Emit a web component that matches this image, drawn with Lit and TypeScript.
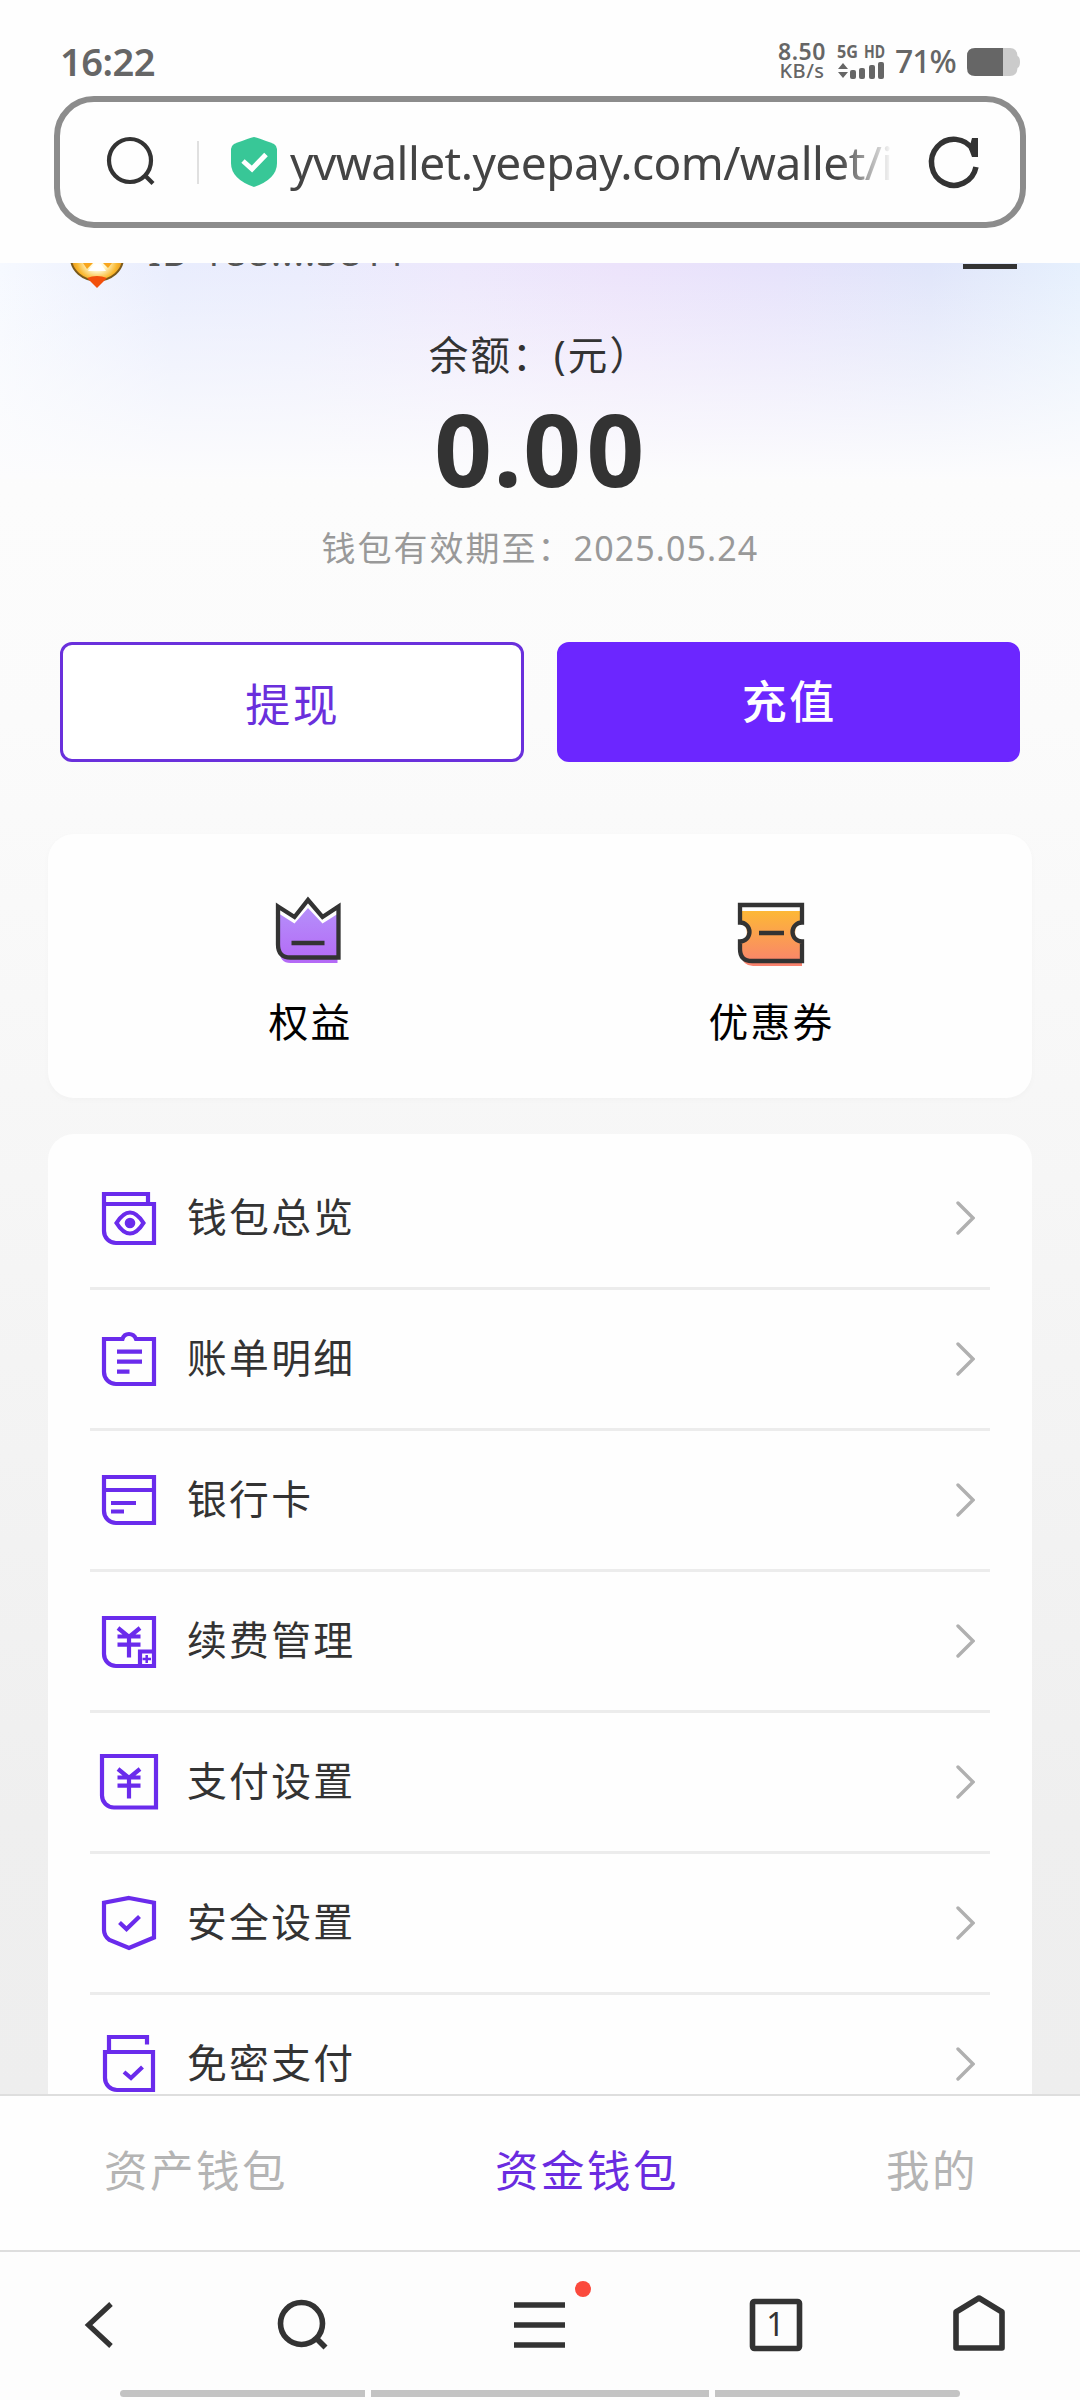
import { LitElement, html, css, svg } from "lit";
import { customElement, property } from "lit/decorators.js";

const yen = svg`<path d="M19 17 L30 26 L41 17 M18.500 25.500 H41.500 M18.500 33.700 H41.500 M30 25 V46.500"/>`;

const icons: Record<string, unknown> = {
  overview: svg`
    <path d="M5 16 H55 V55 H17 A12 12 0 0 1 5 43 V6 H49 V16"/>
    <path d="M17.500 35 Q24 24.500 31 24.500 T44.500 35 Q38 45.500 31 45.500 T17.500 35 Z"/>
    <circle class="solid" cx="31" cy="35" r="5.300"/>`,
  bill: svg`
    <path d="M5 10 H23.500 Q25 5 30 5 Q35 5 37 10 H55 V55 H17 A12 12 0 0 1 5 43 Z"/>
    <path d="M18 22.600 H43 M18 32.700 H43 M18 42.700 H30.500"/>`,
  card: svg`
    <path d="M5 7 H55 V53 H17 A12 12 0 0 1 5 41 Z"/>
    <path d="M5 20 H55 M12 33 H37 M12 41.500 H25"/>`,
  renew: svg`
    <path d="M5 7 H55 V55 H17 A12 12 0 0 1 5 43 Z"/>${yen}
    <path d="M41 55 V40.500 H55"/>
    <path class="thin" d="M43.500 48 H52 M47.700 44 V52"/>`,
  payment: svg`
    <path d="M3 4 H57 V55.500 H15 A12 12 0 0 1 3 43.500 Z"/>${yen}`,
  security: svg`
    <path d="M30 5 L55 9.700 V44.500 L30 55 L10.500 47 Q5 43 5 37 V9.700 Z"/>
    <path d="M20.500 29.500 L27.500 36 L40.500 23.500"/>`,
  nopass: svg`
    <path d="M10 18 V3 H48 V10.500 M6 18 H54 V56 H18 A12 12 0 0 1 6 44 Z"/>
    <path d="M25 38 L32 44 L43.500 33"/>`,
};

@customElement("menu-row")
class MenuRow extends LitElement {
  @property() icon = "";
  @property() label = "";

  static styles = css`
    :host {
      display: flex;
      align-items: center;
      box-sizing: border-box;
      height: 141px;
      padding: 0 15px 0 9px;
      border-bottom: 3px solid #ececec;
    }
    .icon {
      width: 60px;
      height: 60px;
      fill: none;
      stroke: #6a2bec;
      stroke-width: 4.2;
    }
    .icon .solid {
      fill: #6a2bec;
      stroke: none;
    }
    .icon .thin {
      stroke-width: 2.5;
    }
    .label {
      flex: 1;
      margin-left: 28px;
      padding-bottom: 3px;
      font-size: 39.8px;
      line-height: 60px;
      letter-spacing: 2.3px;
      color: #333;
    }
    .arrow {
      width: 20px;
      height: 36px;
      fill: none;
      stroke: #b0b0b0;
      stroke-width: 3.4;
      stroke-linecap: round;
    }
  `;

  render() {
    return html`
      <svg class="icon" viewBox="0 0 60 60">${icons[this.icon]}</svg>
      <span class="label">${this.label}</span>
      <svg class="arrow" viewBox="0 0 20 36"><path d="M3 3 L18 18 L3 33"/></svg>
    `;
  }
}

@customElement("app-root")
class AppRoot extends LitElement {
  static styles = css`
    :host {
      display: flex;
      flex-direction: column;
      width: 1080px;
      height: 2400px;
      overflow: hidden;
      background: #fefefe;
      color: #333;
      font-family: "Noto Sans", "Noto Sans CJK SC", sans-serif;
    }
    * {
      box-sizing: border-box;
    }
    svg {
      display: block;
      flex: none;
    }
    .header {
      flex: none;
      height: 263px;
      background: #fefefe;
    }
    .status {
      display: flex;
      align-items: center;
      height: 96px;
      padding: 28px 59px 0 60px;
      color: #666;
    }
    .time {
      flex: 1;
      padding-bottom: 3px;
      font-size: 38px;
      line-height: 40px;
      font-weight: 600;
      letter-spacing: -0.5px;
    }
    .speed {
      display: flex;
      flex-direction: column;
      align-items: center;
      width: 50px;
      margin-right: 9px;
      padding-bottom: 2px;
      font-weight: 600;
      font-size: 23px;
      line-height: 20px;
      letter-spacing: 0.5px;
    }
    .speed .unit {
      font-size: 20px;
      line-height: 20px;
      font-weight: 500;
    }
    .signal {
      width: 50px;
      height: 42px;
      margin-right: 9px;
    }
    .signal text {
      font-size: 17px;
      font-weight: 700;
    }
    .percent {
      width: 72px;
      padding-bottom: 2px;
      font-size: 32px;
      line-height: 40px;
      font-weight: 500;
      letter-spacing: -1px;
      white-space: nowrap;
    }
    .battery {
      width: 54px;
      height: 28px;
    }
    .urlbar {
      display: flex;
      align-items: center;
      height: 132px;
      margin: 0 54px;
      padding: 0 41px 0 47px;
      border: 6px solid #8c8c8c;
      border-radius: 40px;
    }
    .urlbar svg {
      overflow: visible;
    }
    .divider {
      width: 2px;
      height: 43px;
      margin: 0 32px 0 42px;
      background: #e0e0e0;
    }
    .url {
      flex: 1;
      margin-left: 13px;
      margin-right: 36px;
      padding-bottom: 1px;
      overflow: hidden;
      white-space: nowrap;
      font-size: 46px;
      line-height: 66px;
      letter-spacing: -0.55px;
      color: #444;
      mask-image: linear-gradient(90deg, #000 91%, transparent 100%);
    }
    .page {
      flex: 1;
      min-height: 0;
      display: flex;
      flex-direction: column;
      overflow: hidden;
      padding: 0 48px;
      background:
        linear-gradient(180deg, transparent 0, #fcfcfd 216px, transparent 216px),
        linear-gradient(90deg, #f6f9ff 0, #e9edfd 170px, #eaecfd 300px, #ede8fc 460px, #ece3fb 620px, #e6e2fb 780px, #e0e5fa 930px, #e6f0fd 1080px) 0 0 / 100% 216px no-repeat,
        linear-gradient(180deg, #fdfdfd 0, #fbfbfb 25%, #efefef 85%, #eeeeee 100%);
    }
    .user {
      flex: none;
      display: flex;
      height: 72px;
      margin-top: -46px;
      padding: 0 15px 0 22px;
    }
    .userid {
      flex: 1;
      margin-left: 24px;
      font-size: 38px;
      line-height: 68px;
      letter-spacing: 1.2px;
      color: #555;
    }
    .burger {
      width: 54px;
      height: 52px;
      border-bottom: 5px solid #333;
    }
    .balance {
      flex: none;
      margin-top: 39px;
      text-align: center;
      font-size: 39.5px;
      line-height: 54px;
      letter-spacing: 2.2px;
    }
    .amount {
      flex: none;
      margin-top: 16px;
      padding-left: 4px;
      text-align: center;
      font-size: 101px;
      line-height: 100px;
      font-weight: 700;
      letter-spacing: 5.5px;
    }
    .point {
      margin: 0 -4px;
    }
    .valid {
      flex: none;
      margin-top: 30px;
      text-align: center;
      font-size: 34px;
      line-height: 40px;
      letter-spacing: 2px;
      color: #999;
    }
    .date {
      letter-spacing: 1.1px;
    }
    .actions {
      flex: none;
      display: grid;
      grid-template-columns: 1fr 1fr;
      gap: 33px;
      margin: 74px 12px 0;
    }
    .btn {
      display: flex;
      align-items: center;
      justify-content: center;
      height: 120px;
      padding-left: 2px;
      border: 3px solid #6a30dc;
      border-radius: 12px;
      background: #fff;
      color: #6a2fdc;
      font-size: 45px;
      letter-spacing: 2.5px;
    }
    .btn.primary {
      padding-bottom: 6px;
      border-color: #6c26ff;
      background: #6c26ff;
      color: #fff;
      font-weight: 500;
    }
    .perks {
      flex: none;
      display: grid;
      grid-template-columns: 1fr 1fr;
      height: 264px;
      margin-top: 72px;
      padding: 60px 31px 0;
      border-radius: 26px;
      background: #fefefe;
      box-shadow: 0 2px 6px rgba(0, 0, 0, 0.025);
    }
    .perk {
      display: flex;
      flex-direction: column;
      align-items: center;
      gap: 26px;
      font-size: 39.8px;
      line-height: 60px;
      letter-spacing: 2.2px;
      color: #000;
    }
    .perk span {
      padding-left: 2px;
    }
    .menu {
      flex: none;
      margin-top: 36px;
      padding: 15px 42px 0;
      border-radius: 26px;
      background: #fefefe;
    }
    .tabs {
      flex: none;
      display: flex;
      justify-content: space-between;
      height: 156px;
      padding: 44px 102px 0 104px;
      border-top: 2px solid #dedede;
      background: #fefefe;
      font-size: 43.5px;
      line-height: 60px;
      letter-spacing: 2.5px;
      color: #b4b4b4;
    }
    .tab.active {
      color: #6a2be0;
    }
    .nav {
      flex: none;
      height: 150px;
      border-top: 2px solid #dedede;
      background: #fdfdfd;
    }
    .tools {
      display: grid;
      grid-template-columns: 193px 234px 239px 203px 60px;
      align-content: start;
      height: 138px;
      padding: 36px 70px 0 80px;
    }
    .tools svg {
      overflow: visible;
    }
    .handles {
      display: grid;
      grid-template-columns: 245px 338px 245px;
      gap: 6px;
      justify-content: center;
    }
    .handle {
      height: 7px;
      background: #c3c3c3;
    }
    .handle:first-child {
      border-radius: 4px 0 0 4px;
    }
    .handle:last-child {
      border-radius: 0 4px 4px 0;
    }
  `;

  private menu = [
    ["overview", "钱包总览"],
    ["bill", "账单明细"],
    ["card", "银行卡"],
    ["renew", "续费管理"],
    ["payment", "支付设置"],
    ["security", "安全设置"],
    ["nopass", "免密支付"],
  ];

  render() {
    return html`
      <div class="header">
        <div class="status">
          <span class="time">16:22</span>
          <div class="speed"><span>8.50</span><span class="unit">KB/s</span></div>
          <svg class="signal" viewBox="0 0 50 42" fill="#666">
            <text x="1" y="17" textLength="21" lengthAdjust="spacingAndGlyphs">5G</text>
            <text x="28" y="17" textLength="21" lengthAdjust="spacingAndGlyphs">HD</text>
            <path d="M2 28 L7 22 L12 28 Z M2 31 L7 37 L12 31 Z"/>
            <rect x="14" y="29" width="6" height="9" rx="2"/>
            <rect x="23" y="27" width="6" height="11" rx="2"/>
            <rect x="33" y="24" width="6" height="14" rx="2"/>
            <rect x="42" y="21" width="6" height="17" rx="2"/>
          </svg>
          <span class="percent">71%</span>
          <svg class="battery" viewBox="0 0 54 28">
            <path fill="#cbcbcb" d="M36 0 H43 Q50 0 50.500 8 Q53 9 53 14 Q53 19 50.500 20 Q50 28 43 28 H36 Z"/>
            <path fill="#666" d="M36 0 V28 H8 Q0 28 0 20 V8 Q0 0 8 0 Z"/>
          </svg>
        </div>
        <div class="urlbar">
          <svg width="48" height="48" viewBox="0 0 48 48" fill="none" stroke="#333" stroke-width="4.200">
            <ellipse cx="23" cy="22.500" rx="21" ry="21.500"/><path d="M38 37.500 L46 45.500"/>
          </svg>
          <span class="divider"></span>
          <svg width="46" height="52" viewBox="0 0 46 52">
            <path fill="#38c797" d="M23 1 Q25 1 43 8 Q46 10 46 13 V27 Q46 43 23 51 Q0 43 0 27 V13 Q0 10 3 8 Q21 1 23 1 Z"/>
            <path fill="none" stroke="#fff" stroke-width="5" d="M12 25 L21 33 L35 18.500"/>
          </svg>
          <span class="url">yvwallet.yeepay.com/wallet/i</span>
          <svg width="50" height="52" viewBox="0 0 50 52" fill="none" stroke="#333" stroke-width="5.500">
            <path d="M44 14 A22.500 23 0 1 0 47 31"/><path stroke="none" fill="#333" d="M43 2 H49 V21 H43 L40 13 Z"/>
          </svg>
        </div>
      </div>

      <div class="page">
        <div class="user">
          <svg width="54" height="72" viewBox="0 0 54 72">
            <defs>
              <radialGradient id="gold" cx="50%" cy="60%" r="55%">
                <stop offset="0" stop-color="#fff"/><stop offset="0.35" stop-color="#fff6c8"/>
                <stop offset="0.7" stop-color="#f9b62c"/><stop offset="1" stop-color="#d9820f"/>
              </radialGradient>
            </defs>
            <ellipse cx="27" cy="41" rx="26" ry="22.500" fill="url(#gold)" stroke="#7a5a1c" stroke-width="2"/>
            <path fill="#f8a51c" d="M13 46 H23 L17 52 Z M33 46 H42 L38 51 Z"/>
            <path fill="#fff" d="M18 54 L24 47 H31 L36 54 Z"/>
            <path fill="#f2500c" d="M17 61 Q27 57 37 61 L27 71 Z"/>
          </svg>
          <span class="userid">ID 188....3811</span>
          <div class="burger"></div>
        </div>
        <div class="balance">余额：(元）</div>
        <div class="amount">0<span class="point">.</span>00</div>
        <div class="valid">钱包有效期至：<span class="date">2025.05.24</span></div>
        <div class="actions">
          <div class="btn">提现</div>
          <div class="btn primary">充值</div>
        </div>
        <div class="perks">
          <div class="perk">
            <svg width="72" height="72" viewBox="1.500 0 72 72">
              <defs><linearGradient id="violet" x2="0" y2="1"><stop stop-color="#b58ffa"/><stop offset="1" stop-color="#b469f6"/></linearGradient></defs>
              <path fill="url(#violet)" d="M7 20 L22 29.500 L35.500 14 L50 29.500 L65 20 V69 H18 Q7 69 7 56 Z"/>
              <path fill="none" stroke="#333" stroke-width="4.300" d="M5.500 13 L22 23.500 L35.500 6.500 L50 23.500 L66 13 V64 H18 Q5.500 64 5.500 51 Z M19 49.500 H52" transform="translate(0 -0.500)"/>
            </svg>
            <span>权益</span>
          </div>
          <div class="perk">
            <svg width="72" height="72" viewBox="0 0 72 72">
              <defs><linearGradient id="orange" x2="0" y2="1"><stop stop-color="#fdb836"/><stop offset="1" stop-color="#f9816f"/></linearGradient></defs>
              <path fill="url(#orange)" d="M5 17 H67 V29 A10 10 0 0 0 67 48 V72 H18 Q8 72 5 60 V48 A10 10 0 0 0 5 29 Z"/>
              <path fill="none" stroke="#333" stroke-width="4.300" d="M5 11 H67 V28.500 A9.500 9.500 0 0 0 67 47.500 V67 H17 Q5 67 5 55 V47.500 A9.500 9.500 0 0 0 5 28.500 Z M24 39 H49"/>
            </svg>
            <span>优惠券</span>
          </div>
        </div>
        <div class="menu">
          ${this.menu.map(([icon, label]) => html`<menu-row .icon=${icon} .label=${label}></menu-row>`)}
        </div>
      </div>

      <div class="tabs">
        <span class="tab">资产钱包</span>
        <span class="tab active">资金钱包</span>
        <span class="tab">我的</span>
      </div>

      <div class="nav">
        <div class="tools">
          <svg width="40" height="72" viewBox="0 0 40 72" fill="none" stroke="#333" stroke-width="5.200">
            <path d="M31 16 L8.500 37 L31 58"/>
          </svg>
          <svg width="60" height="72" viewBox="0 0 60 72" fill="none" stroke="#333" stroke-width="5.600">
            <circle cx="28.500" cy="35.500" r="21"/><path d="M43 50 L52.500 59.500"/>
          </svg>
          <svg width="84" height="72" viewBox="0 0 84 72">
            <path stroke="#333" stroke-width="5.600" d="M7 17 H58 M7 37 H58 M7 57 H58"/>
            <circle cx="76" cy="1" r="8" fill="#fb4a3d"/>
          </svg>
          <svg width="60" height="72" viewBox="0 0 60 72">
            <rect x="6.500" y="13.500" width="47" height="47" rx="2" fill="none" stroke="#333" stroke-width="5.600"/>
            <text x="29.500" y="48" text-anchor="middle" font-size="32" fill="#333">1</text>
          </svg>
          <svg width="60" height="72" viewBox="0 0 60 72" fill="none" stroke="#333" stroke-width="5.600" stroke-linejoin="round">
            <path d="M7 24 L30 10 L53 24 V60 H7 Z"/>
          </svg>
        </div>
        <div class="handles">
          <span class="handle"></span><span class="handle"></span><span class="handle"></span>
        </div>
      </div>
    `;
  }
}
